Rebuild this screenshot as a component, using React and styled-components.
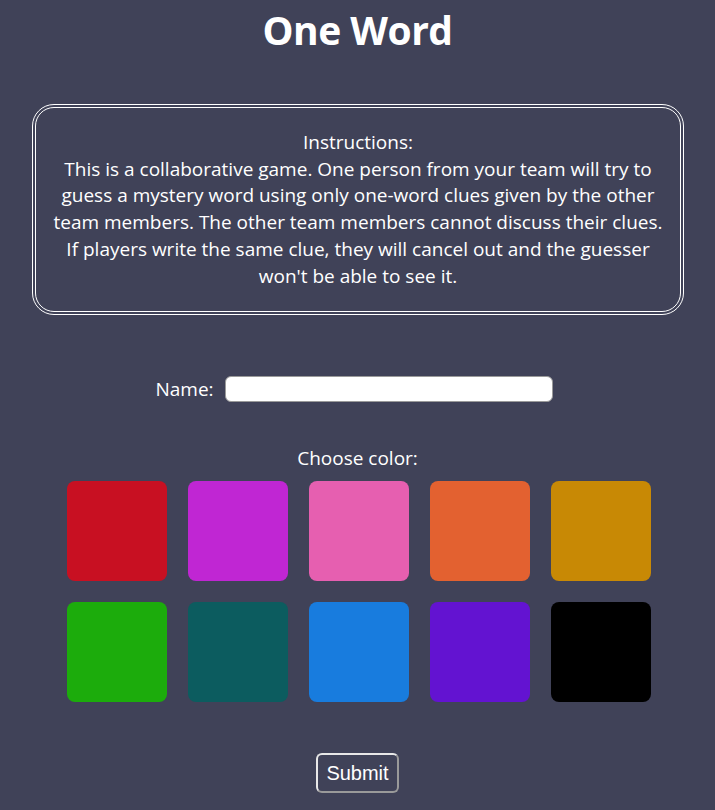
import React from 'react';
import styled, { createGlobalStyle } from 'styled-components';

const GlobalStyle = createGlobalStyle`
    html, body {
        margin: 0;
        padding: 0;
        background-color: #404258;
    }
    body {
        font-family: "Open Sans", "Noto Sans", sans-serif;
        color: #ffffff;
    }
`

const COLORS = [
    '#c81022', '#c026d3', '#e65fb0', '#e36130', '#c88905',
    '#1cac0c', '#0c5c5f', '#187cde', '#6313d1', '#000000',
];

const Page = styled.div`
    display: flex;
    flex-direction: column;
    align-items: center;
    min-height: 810px;
    padding-top: 8px;
    box-sizing: border-box;
`

const Title = styled.h1`
    margin: 0;
    font-size: 39px;
    font-weight: 700;
    line-height: 44px;
    letter-spacing: -0.5px;
`

const Instructions = styled.div`
    width: 652px;
    box-sizing: border-box;
    margin-top: 52px;
    margin-left: 1px;
    padding: 21px 17px 22px;
    border: 4px double #ffffff;
    border-radius: 22px;
    text-align: center;
    font-size: 19px;
    line-height: 26.7px;
`

const NameRow = styled.label`
    display: flex;
    align-items: center;
    gap: 11px;
    margin-top: 61px;
    margin-right: 7px;
    font-size: 19px;
`

const NameInput = styled.input`
    width: 328px;
    height: 26px;
    box-sizing: border-box;
    border: 1px solid #9a9a9a;
    border-radius: 6px;
    background: #ffffff;
    outline: none;
`

const ChooseLabel = styled.div`
    margin-top: 44px;
    font-size: 19px;
    line-height: 24px;
`

const Swatches = styled.div`
    display: grid;
    grid-template-columns: repeat(5, 100px);
    gap: 21px;
    margin-top: 11px;
    margin-left: 2px;
`

const Swatch = styled.div`
    width: 100px;
    height: 100px;
    border-radius: 8px;
    background-color: ${({ color }) => color};
    cursor: pointer;
`

const SubmitButton = styled.button`
    margin-top: 51px;
    padding: 4px 8px;
    height: 40px;
    font-family: "Liberation Sans", Arial, sans-serif;
    font-size: 20px;
    color: #ffffff;
    background: transparent;
    border: 2px solid;
    border-color: #e8e8e8 #9a9a9a #9a9a9a #e8e8e8;
    border-radius: 6px;
`

export default function App() {
    return (
        <>
            <GlobalStyle />
            <Page>
                <Title>One Word</Title>
                <Instructions>
                    Instructions:<br />
                    This is a collaborative game. One person from your team will try to guess a mystery word using only one-word clues given by the other team members. The other team members cannot discuss their clues. If players write the same clue, they will cancel out and the guesser won't be able to see it.
                </Instructions>
                <NameRow>
                    Name:
                    <NameInput type="text" />
                </NameRow>
                <ChooseLabel>Choose color:</ChooseLabel>
                <Swatches>
                    {COLORS.map((c) => (
                        <Swatch key={c} color={c} />
                    ))}
                </Swatches>
                <SubmitButton>Submit</SubmitButton>
            </Page>
        </>
    )
}
